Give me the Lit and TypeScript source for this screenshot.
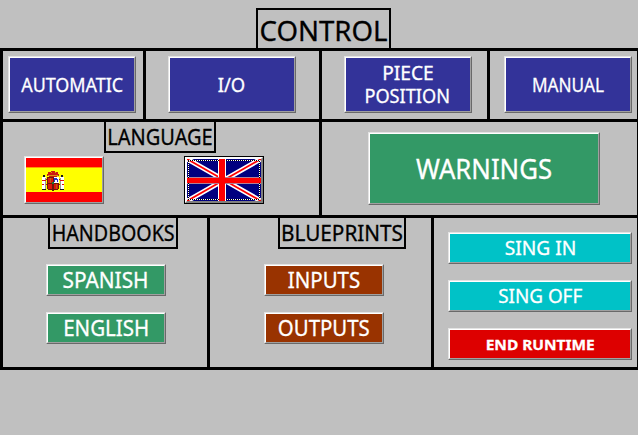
import { LitElement, html, svg, css } from "lit";
import { customElement, property } from "lit/decorators.js";

/** A line of text set to a fixed width. x is the centre, y the baseline. */
interface Line {
  text: string;
  x: number;
  y: number;
  width: number;
}

const line = (text: string, x: number, y: number, width: number): Line => ({ text, x, y, width });

@customElement("panel-text")
class PanelText extends LitElement {
  @property({ attribute: false }) lines: Line[] = [];

  static styles = css`
    :host { display: block; width: 100%; height: 100%; }
    .canvas { display: block; width: 100%; height: 100%; overflow: visible; }
    .line { fill: currentColor; stroke: currentColor; stroke-width: 0.3px; text-anchor: middle; }
  `;

  render() {
    return html`<svg class="canvas">
      ${this.lines.map(
        (l) => svg`<text class="line" x=${l.x} y=${l.y} textLength=${l.width} lengthAdjust="spacingAndGlyphs">${l.text}</text>`
      )}
    </svg>`;
  }
}

@customElement("flag-spain")
class FlagSpain extends LitElement {
  static styles = css`
    :host, .flag { display: block; }
  `;

  render() {
    return html`<svg class="flag" width="76" height="44" viewBox="0 0 76 44" shape-rendering="crispEdges">
      <rect width="76" height="44" fill="#ff0000" />
      <rect y="9" width="76" height="25" fill="#ffff00" />
      <rect y="9" width="76" height="1" fill="#ff9900" />
      <path d="M16 19h4v13h-4zM34 19h4v13h-4z" fill="#ffffff" />
      <path d="M17 17h2v2h-2zM35 17h2v2h-2zM16 31h4v1h-4zM34 31h4v1h-4z" fill="#181818" />
      <path d="M19 20h1v11h-1zM34 20h1v11h-1z" fill="#999999" />
      <path d="M16 22h4v1h-4zM16 26h2v1h-2zM34 22h4v1h-4zM36 26h2v1h-2z" fill="#dd1010" />
      <path d="M25 14h4v-1h-4zM22 14h10v2h1v2h-2v2h-8v-2h-2v-2h1z" fill="#cc1510" />
      <path d="M22 17h10v1h-10zM25 14h1v1h-1zM29 14h1v1h-1z" fill="#d89018" />
      <path d="M21 19h12v11l-1 2h-3l-2 1-2-1h-3l-1-2z" fill="#6b1808" />
      <path d="M22 20h5v5h-5zM22 26h4v5h-4zM28 26h4v5h-4z" fill="#dd1808" />
      <path d="M28 19h5v6h-5z" fill="#ffffff" />
      <path d="M28 20h3v1h1v3h-1v-2h-2v2h-1z" fill="#2435cc" />
      <path d="M24 20h1v5h-1zM30 26h1v5h-1z" fill="#b56412" />
      <path d="M26 24h2v2h-2z" fill="#187838" />
      <path d="M20 21h1v1h-1zM33 21h1v1h-1zM20 26h1v1h-1zM33 26h1v1h-1z" fill="#b01010" />
    </svg>`;
  }
}

@customElement("flag-uk")
class FlagUk extends LitElement {
  static styles = css`
    :host, .flag { display: block; }
  `;

  render() {
    return html`<svg class="flag" width="74" height="42" viewBox="0 0 74 42" shape-rendering="crispEdges">
      <rect width="74" height="42" fill="#000080" />
      <g shape-rendering="auto">
        <path d="M0 0L74 42M74 0L0 42" stroke="#ffffff" stroke-width="5" />
        <path d="M0 0L74 42M74 0L0 42" stroke="#ff0000" stroke-width="1.8" />
      </g>
      <path d="M31 0h8v42h-8z" fill="#ffffff" />
      <path d="M0 18h74v7h-74z" fill="#b08098" />
      <path d="M32 0h6v42h-6zM0 19h74v5h-74z" fill="#ff0000" />
      <rect x="1.5" y="1.5" width="71" height="39" fill="none" stroke="#000000" />
      <rect x="1.5" y="1.5" width="71" height="39" fill="none" stroke="#ffffff" stroke-dasharray="1 1" />
      <path d="M1 19h1v5h-1zM72 19h1v5h-1zM32 1h6v1h-6zM32 40h6v1h-6z" fill="#ff0000" />
    </svg>`;
  }
}

@customElement("app-root")
class AppRoot extends LitElement {
  static styles = css`
    :host {
      display: block;
      width: 638px;
      height: 435px;
      overflow: hidden;
      background: #c0c0c0;
      color: #000;
      font-family: "Noto Sans", "DejaVu Sans", sans-serif;
    }
    * { box-sizing: border-box; }
    .header { height: 48px; padding: 8px 0 0 256px; }
    .title { width: 135px; height: 40px; border: 2px solid #000; border-bottom: 0; font-size: 28px; }
    .board {
      display: grid;
      grid-template-rows: 68px 93px 149px;
      gap: 3px;
      padding: 3px 1px 3px 3px;
      background: #000;
    }
    .row { display: grid; gap: 3px; }
    .modes { grid-template-columns: 140px 173px 165px 147px; }
    .middle { grid-template-columns: 316px 315px; }
    .bottom { grid-template-columns: 204px 221px 203px; }
    .cell { background: #c0c0c0; min-width: 0; }
    .mode { padding: 5px 0 0 22px; }
    .mode.first { padding-left: 5px; }
    .mode.last { padding-left: 14px; }
    .caption { height: 31px; border: 2px solid #000; border-top: 0; font-size: 22px; }
    .caption.language { width: 112px; margin-left: 101px; }
    .caption.handbooks { width: 130px; margin-left: 45px; }
    .caption.blueprints { width: 128px; margin-left: 68px; }
    .flags { display: flex; gap: 80px; padding: 3px 0 0 21px; }
    .alerts { padding: 10px 0 0 46px; }
    .stack { display: flex; flex-direction: column; gap: 16px; }
    .stack.handbooks { padding: 15px 0 0 43px; }
    .stack.blueprints { padding: 15px 0 0 54px; }
    .stack.session { padding: 14px 0 0 14px; }
    .button {
      display: block;
      margin: 0;
      padding: 0;
      border: 1px solid;
      border-color: #e3e3e3 #696969 #696969 #e3e3e3;
      color: #fff;
      background: #c0c0c0;
      font: 22px "Noto Sans", "DejaVu Sans", sans-serif;
      width: 120px;
      height: 32px;
    }
    .face {
      display: block;
      width: 100%;
      height: 100%;
      border: 1px solid;
      border-color: #fff #a0a0a0 #a0a0a0 #fff;
    }
    .blue { width: 128px; height: 57px; font-size: 19.4px; }
    .blue .face { background: #333399; }
    .green .face { background: #339966; }
    .brown .face { background: #993300; }
    .cyan { width: 184px; font-size: 19px; }
    .cyan .face { background: #00c2c7; }
    .red { width: 184px; font-size: 15px; font-weight: 700; }
    .red .face { background: #dd0000; }
    .warnings { width: 232px; height: 73px; font-size: 27px; }
    .flag-button { width: 80px; height: 48px; }
    .focused { border-color: #000; }
    .focused .face { border-width: 2px; border-color: #fff #808080 #808080 #fff; }
  `;

  private button(kind: string, ...lines: Line[]) {
    return html`<button class="button ${kind}">
      <span class="face"><panel-text .lines=${lines}></panel-text></span>
    </button>`;
  }

  private caption(kind: string, text: Line) {
    return html`<div class="caption ${kind}"><panel-text .lines=${[text]}></panel-text></div>`;
  }

  render() {
    return html`
      <div class="header">
        <div class="title"><panel-text .lines=${[line("CONTROL", 65.5, 31, 128)]}></panel-text></div>
      </div>
      <div class="board">
        <div class="row modes">
          <div class="cell mode first">${this.button("blue", line("AUTOMATIC", 62.2, 34, 102))}</div>
          <div class="cell mode">${this.button("blue", line("I/O", 61.5, 34, 27.5))}</div>
          <div class="cell mode">
            ${this.button("blue", line("PIECE", 62, 22, 51.5), line("POSITION", 61.2, 45, 85.5))}
          </div>
          <div class="cell mode last">${this.button("blue", line("MANUAL", 62, 34, 72))}</div>
        </div>
        <div class="row middle">
          <div class="cell">
            ${this.caption("language", line("LANGUAGE", 54, 23, 105.5))}
            <div class="flags">
              <button class="button flag-button"><span class="face"><flag-spain></flag-spain></span></button>
              <button class="button flag-button focused"><span class="face"><flag-uk></flag-uk></span></button>
            </div>
          </div>
          <div class="cell alerts">${this.button("green warnings", line("WARNINGS", 114, 44.5, 136))}</div>
        </div>
        <div class="row bottom">
          <div class="cell">
            ${this.caption("handbooks", line("HANDBOOKS", 63.2, 23, 123))}
            <div class="stack handbooks">
              ${this.button("green", line("SPANISH", 57.5, 22, 86))}
              ${this.button("green", line("ENGLISH", 58.2, 22, 86))}
            </div>
          </div>
          <div class="cell">
            ${this.caption("blueprints", line("BLUEPRINTS", 62, 23, 122))}
            <div class="stack blueprints">
              ${this.button("brown", line("INPUTS", 58, 22, 72.5))}
              ${this.button("brown", line("OUTPUTS", 57.8, 22, 92))}
            </div>
          </div>
          <div class="cell stack session">
            ${this.button("cyan", line("SING IN", 90.5, 21, 71.5))}
            ${this.button("cyan", line("SING OFF", 90.2, 21, 84))}
            ${this.button("red", line("END RUNTIME", 90.2, 20, 109))}
          </div>
        </div>
      </div>
    `;
  }
}
